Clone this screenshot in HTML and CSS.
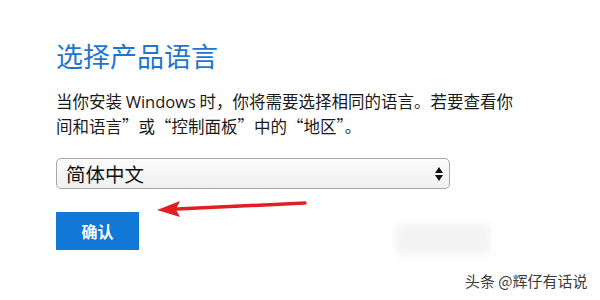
FILE: index.html
```html
<!DOCTYPE html>
<html lang="zh-CN">
<head>
<meta charset="utf-8">
<link rel="stylesheet" href="styles.css">
</head>
<body>
<main class="page">
  <h1 class="title">选择产品语言</h1>
  <p class="desc">当你安装 <span class="latin">Windows</span> 时，你将需要选择相同的语言。若要查看你<br>间和语言”或“控制面板”中的“地区”。</p>
  <div class="select">
    <span class="select-value">简体中文</span>
    <svg class="select-arrows" width="8" height="14" viewBox="0 0 8 14"><path d="M4 0 L8 6 L0 6 Z M0 8 L8 8 L4 14 Z" fill="#111"/></svg>
  </div>
  <button class="confirm">确认</button>
</main>
<svg class="annot-arrow" width="170" height="30" viewBox="0 0 170 30">
  <path d="M153 5 L25 11" stroke="#e01e24" stroke-width="3.5" stroke-linecap="round" fill="none"/>
  <path d="M5 12 L28 3 L24 11.5 L28 19 Z" fill="#e01e24"/>
</svg>
<div class="blur-box"></div>
<div class="watermark">头条 @辉仔有话说</div>
</body>
</html>
```
FILE: styles.css
```css
html, body {
  margin: 0;
  padding: 0;
  background: #ffffff;
  width: 600px;
  height: 300px;
  overflow: hidden;
  font-family: "Noto Sans CJK SC", "Noto Sans", sans-serif;
}
.page {
  padding: 40px 0 0 56px;
  display: flex;
  flex-direction: column;
  align-items: flex-start;
}
.title {
  margin: 0;
  font-size: 27px;
  line-height: 32px;
  font-weight: 400;
  color: #1f76cf;
}
.desc {
  margin: 17px 0 0 0;
  font-size: 16.5px;
  line-height: 25px;
  color: #1a1a1a;
  white-space: nowrap;
}
.latin {
  font-family: "Open Sans", "Noto Sans", sans-serif;
}
.select {
  margin-top: 19px;
  box-sizing: border-box;
  width: 394px;
  height: 31px;
  border: 1px solid #a8a8a8;
  border-radius: 5px;
  background: linear-gradient(#fbfbfb, #f1f1f1);
  display: flex;
  align-items: center;
  justify-content: space-between;
  padding: 0 6px 0 9px;
}
.select-value {
  font-size: 19.5px;
  line-height: 28px;
  color: #111;
}
.select-arrows {
  display: block;
}
.confirm {
  margin-top: 23px;
  width: 83px;
  height: 38px;
  border: 0;
  padding: 0;
  background: #1178d6;
  color: #ffffff;
  font-family: "Noto Sans CJK SC", sans-serif;
  font-size: 16px;
  font-weight: 700;
}
.annot-arrow {
  position: absolute;
  left: 152px;
  top: 198px;
}
.blur-box {
  position: absolute;
  left: 396px;
  top: 224px;
  width: 94px;
  height: 30px;
  background: #f3f3f3;
  filter: blur(4px);
}
.watermark {
  position: absolute;
  left: 465px;
  top: 271px;
  font-size: 15px;
  line-height: 20px;
  color: #3a3a3a;
  text-shadow: 0 0 2px #fff, 0 0 2px #fff;
  white-space: nowrap;
}
```
